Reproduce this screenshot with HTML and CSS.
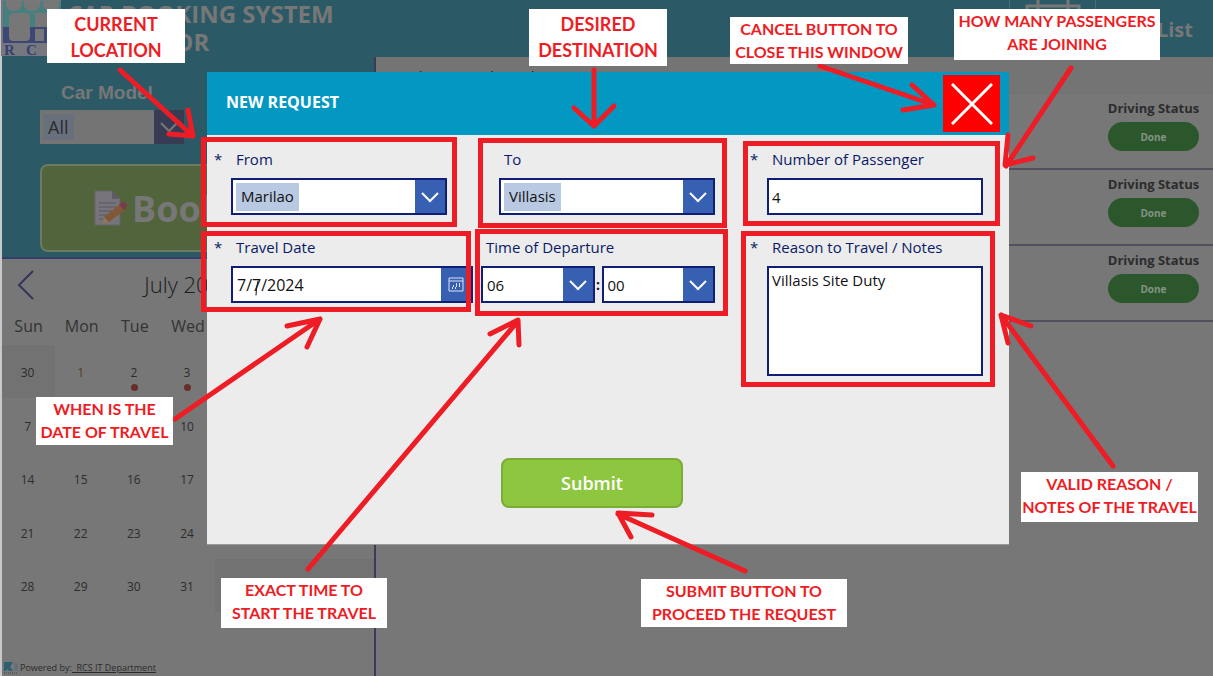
FILE: index.html
```html
<!DOCTYPE html>
<html lang="en">
<head>
<meta charset="utf-8">
<title>Car Booking System &amp; Monitor</title>
<link rel="stylesheet" href="styles.css">
</head>
<body>
<div class="stage">
  <div class="app">
    <header class="topbar">
      <svg class="logo" viewBox="0 0 60 56" role="img" aria-label="RCS logo">
        <rect width="60" height="56" fill="#777780"/>
        <rect x="2" y="1" width="58" height="26" fill="#467f80"/>
        <path d="M5 1h16v4a8 6 0 0 1-16 0zM23 1h16v4a8 6 0 0 1-16 0zM42 1h16v4a8 6 0 0 1-16 0z" fill="#777"/>
        <path d="M2 27h58v16H2z" fill="#3d4775"/>
        <path d="M8 37V18q0-5 5-5h13q3 0 3 4v20q0 4-4 4H12q-4 0-4-4z" fill="#777"/>
        <path d="M34 27V13h12q9 0 9 7t-7 7z" fill="#777"/>
        <path d="M34 29h9v12h-9z" fill="#777"/>
        <path d="M2 44h58v12H2z" fill="#777780"/>
        <g class="logo-text"><text x="3" y="55">R</text><text x="25" y="55">C</text><text x="47" y="55">S</text></g>
      </svg>
      <h1 class="title">CAR BOOKING SYSTEM<br>&amp; MONITOR</h1>
      <div class="cal-box">
        <svg viewBox="0 0 56 56" width="56" height="56" fill="none" stroke="#777" stroke-width="3"><path d="M2 56V6h52v50M13 0v14M43 0v14M2 14h52"/></svg>
      </div>
      <span class="list-title">Trip List</span>
    </header>
    <main class="columns">
      <section class="side">
        <div class="filters">
          <div class="model">
            <label class="model-label" for="model">Car Model</label>
            <div class="combo dim">
              <select id="model" class="chip"><option>All</option></select>
              <span class="arrow"><svg viewBox="0 0 20 12" width="20" height="12"><path d="M2 2l8 8 8-8"/></svg></span>
            </div>
          </div>
          <button class="book" type="button">
            <svg viewBox="0 0 34 36" width="34" height="36"><path d="M1 1h17l8 8v26H1z" fill="#77757b" stroke="#66646c"/><path d="M18 1v8h8z" fill="#5d5b66"/><path d="M5 13h17M5 17h17M5 21h13M5 25h10M5 29h6" stroke="#595866" stroke-width="1"/><path d="M8 34l2-7L26 14l5 6-16 12z" fill="#805838"/><path d="M25 15l3-3q3-1 5 4l-3 4z" fill="#7d3a4c"/><path d="M8 34l2-7 5 5z" fill="#8a7a60"/></svg>
            <span>Book Now</span>
          </button>
        </div>
        <div class="month">
          <button class="prev" type="button" aria-label="Previous month"><svg viewBox="0 0 20 32" width="20" height="32"><path d="M17 2L3 16l14 14" fill="none" stroke="#34355a" stroke-width="2"/></svg></button>
          <span class="month-name">July 2024</span>
        </div>
        <table class="calendar">
          <thead><tr><th>Sun</th><th>Mon</th><th>Tue</th><th>Wed</th><th>Thu</th><th>Fri</th><th>Sat</th></tr></thead>
          <tbody>
            <tr><td class="off">30</td><td class="today">1</td><td class="busy">2</td><td class="busy">3</td><td>4</td><td>5</td><td>6</td></tr>
            <tr><td>7</td><td>8</td><td>9</td><td>10</td><td>11</td><td>12</td><td>13</td></tr>
            <tr><td>14</td><td>15</td><td>16</td><td>17</td><td>18</td><td>19</td><td>20</td></tr>
            <tr><td>21</td><td>22</td><td>23</td><td>24</td><td>25</td><td>26</td><td>27</td></tr>
            <tr><td>28</td><td>29</td><td>30</td><td>31</td><td class="off"></td><td class="off"></td><td class="off"></td></tr>
          </tbody>
        </table>
        <footer class="credit">
          <svg viewBox="0 0 14 12" width="14" height="12"><path d="M0 0h9L6 5l3 4H5L3 7 2 9H0z" fill="#2b5f72"/><path d="M10 1h4v8h-4z" fill="#66707a"/><path d="M0 11h14" stroke="#444" stroke-dasharray="1 1"/></svg>
          <span>Powered by:<a href="#rcs">&nbsp; RCS IT Department</a></span>
        </footer>
      </section>
      <section class="trips">
        <div class="day">Travel Date: Friday, July 5, 2024</div>
        <div class="trip"><div class="status"><b>Driving Status</b><button type="button" class="pill">Done</button></div></div>
        <div class="trip"><div class="status"><b>Driving Status</b><button type="button" class="pill">Done</button></div></div>
        <div class="trip"><div class="status"><b>Driving Status</b><button type="button" class="pill">Done</button></div></div>
      </section>
    </main>
  </div>

  <form class="modal" role="dialog" aria-labelledby="dlg">
    <div class="modal-head">
      <h2 id="dlg">NEW REQUEST</h2>
      <button class="close" type="button" aria-label="Cancel"><svg viewBox="0 0 42 42" width="42" height="42"><path d="M1 1l40 40M41 1L1 41" stroke="#fff" stroke-width="3"/></svg></button>
    </div>
    <div class="row">
      <div class="field">
        <label for="from"><span class="req">*</span>From</label>
        <div class="combo"><select id="from" class="chip"><option>Marilao</option></select><span class="arrow"><svg viewBox="0 0 20 12" width="20" height="12"><path d="M2 2l8 8 8-8"/></svg></span></div>
      </div>
      <div class="field">
        <label for="to"><span class="req"></span>To</label>
        <div class="combo"><select id="to" class="chip"><option>Villasis</option></select><span class="arrow"><svg viewBox="0 0 20 12" width="20" height="12"><path d="M2 2l8 8 8-8"/></svg></span></div>
      </div>
      <div class="field">
        <label for="pax"><span class="req">*</span>Number of Passenger</label>
        <input id="pax" class="box" type="text" value="4">
      </div>
    </div>
    <div class="row row-date">
      <div class="field">
        <label for="date"><span class="req">*</span>Travel Date</label>
        <div class="combo"><input id="date" class="plain date" type="text" value="7/7/2024"><span class="arrow"><svg class="cal-icon" viewBox="0 0 16 15" width="16" height="15"><path d="M1 1h14v13H1zM1 4h14"/><path d="M8 7h1M11 7h1M5 9h1M8 9h1M11 9h1M4 11h1M7 11h1" stroke-width="2"/></svg></span></div>
      </div>
      <div class="field">
        <label for="hour"><span class="req"></span>Time of Departure</label>
        <div class="time">
          <div class="combo"><select id="hour" class="plain"><option>06</option></select><span class="arrow"><svg viewBox="0 0 20 12" width="20" height="12"><path d="M2 2l8 8 8-8"/></svg></span></div>
          <b class="colon">:</b>
          <div class="combo"><select class="plain" aria-label="Minutes"><option>00</option></select><span class="arrow"><svg viewBox="0 0 20 12" width="20" height="12"><path d="M2 2l8 8 8-8"/></svg></span></div>
        </div>
      </div>
      <div class="field notes">
        <label for="notes"><span class="req">*</span>Reason to Travel / Notes</label>
        <textarea id="notes" class="box">Villasis Site Duty</textarea>
      </div>
    </div>
    <button class="submit" type="button">Submit</button>
  </form>

  <div class="frame f-from"></div>
  <div class="frame f-to"></div>
  <div class="frame f-pax"></div>
  <div class="frame f-date"></div>
  <div class="frame f-time"></div>
  <div class="frame f-notes"></div>
  <svg class="arrows" viewBox="0 0 1213 676" width="1213" height="676" aria-hidden="true">
    <path d="M120 70L193 136M188 110L193 136L169 134"/>
    <path d="M594 70V126M574 108L594 126L614 106"/>
    <path d="M820 66L934 105M912 85L934 105L903 110"/>
    <path d="M1071 68L1006 166M1008 135L1005 165L1033 158"/>
    <path d="M175 419L320 319M287 326L320 319L307 347"/>
    <path d="M308 569L518 321M490 334L518 320L519 345"/>
    <path d="M745 571L618 514M652 515L618 513L631 537"/>
    <path d="M1113 466L1001 315M1031 326L1001 315L1008 343"/>
    <path class="caret" d="M258 281Q256 288 256 295"/>
  </svg>
  <div class="note big n-from">CURRENT<br>LOCATION</div>
  <div class="note big n-to">DESIRED<br>DESTINATION</div>
  <div class="note n-cancel">CANCEL BUTTON TO<br>CLOSE THIS WINDOW</div>
  <div class="note n-pax">HOW MANY PASSENGERS<br>ARE JOINING</div>
  <div class="note n-date">WHEN IS THE<br>DATE OF TRAVEL</div>
  <div class="note n-time">EXACT TIME TO<br>START THE TRAVEL</div>
  <div class="note n-submit">SUBMIT BUTTON TO<br>PROCEED THE REQUEST</div>
  <div class="note n-notes">VALID REASON /<br>NOTES OF THE TRAVEL</div>
</div>
</body>
</html>
```

FILE: styles.css
```css
* { box-sizing: border-box; }
body { margin: 0; background: #777; font-family: "Open Sans", "Noto Sans", sans-serif; color: #2b2b2b; }
button, input, select, textarea { font: inherit; color: inherit; border: 0; padding: 0; margin: 0; background: none; border-radius: 0; }
select { appearance: none; }
h1, h2 { margin: 0; }

.stage { position: relative; min-height: 100vh; overflow: hidden; }
.app { display: flex; flex-direction: column; min-height: 100vh; border-left: 2px solid #c8c8cc; }

.topbar { display: flex; height: 57px; background: #2b5a66; color: #777; }
.logo { width: 60px; height: 56px; flex: none; margin-left: -1px; }
.logo-text { font: bold 15px "Liberation Serif", serif; fill: #34406f; }
.title { flex: 1; margin-left: 6px; font-size: 24px; line-height: 28px; font-weight: 700; }
.cal-box { width: 87px; height: 57px; overflow: hidden; border: 1px solid #4c6c76; border-width: 0 1px; padding-left: 15px; }
.list-title { width: 117px; padding-right: 20px; text-align: right; font-size: 20px; line-height: 60px; font-weight: 700; white-space: nowrap; }

.columns { flex: 1; display: flex; }
.side { width: 374px; border-right: 2px solid #3a3a5a; display: flex; flex-direction: column; }
.filters { height: 202px; background: #2b5a66; border-bottom: 2px solid #34406a; padding: 24px 38px 0; display: flex; flex-direction: column; gap: 20px; }
.model { width: 144px; }
.model-label { display: block; padding-left: 21px; font: bold 19px/24px "Liberation Sans", sans-serif; color: #777; margin-bottom: 5px; }
.book { height: 88px; border: 2px solid #6b7a62; border-radius: 8px; background: #52643b; color: #777; font-size: 36px; font-weight: 700; display: flex; align-items: center; gap: 4px; padding-left: 52px; white-space: nowrap; }

.month { display: flex; height: 52px; align-items: center; }
.prev { width: 48px; height: 32px; }
.month-name { flex: 1; padding: 0 46px 3px 0; text-align: center; font-size: 22px; font-weight: 300; color: #1c1c1c; }
.calendar { width: 100%; table-layout: fixed; border-collapse: collapse; text-align: center; font-size: 12px; }
.calendar th { height: 34px; padding: 0 0 4px; font-size: 16px; font-weight: 400; color: #333; }
.calendar td { height: 53px; padding: 2px 2px 0 0; color: #2c2c2c; position: relative; }
.calendar tr:nth-child(even) td { height: 54px; }
.calendar .off { background: #727272; }
.calendar .today { color: #4f4022; }
.busy::after { content: ""; position: absolute; left: 50%; bottom: 7px; width: 7px; height: 7px; margin-left: -4px; border-radius: 50%; background: #6a2d2d; }
.credit { margin-top: auto; padding: 0 2px 1px; display: flex; align-items: center; gap: 2px; font-size: 9px; line-height: 14px; }
.credit a { color: inherit; }

.trips { flex: 1; }
.day { height: 37px; padding: 9px 4px 0; background: #747474; font-size: 15px; line-height: 20px; border-bottom: 1px solid #707070; color: #222; }
.trip { height: 76px; border-bottom: 2px solid #50505f; padding: 5px 14px 0 0; display: flex; justify-content: flex-end; }
.status { width: 91px; display: flex; flex-direction: column; align-items: center; gap: 4px; font-size: 13px; line-height: 19px; color: #2c2c2e; white-space: nowrap; }
.pill { width: 91px; height: 29px; border-radius: 15px; background: #2c572d; color: #849284; font-size: 10px; font-weight: 700; padding-top: 2px; }

.modal { position: absolute; left: 207px; top: 72px; width: 802px; height: 473px; background: #ececec; border-bottom: 1px solid #999; color: #0a1a66; }
.modal-head { height: 63px; background: #0398c1; display: flex; align-items: center; justify-content: space-between; padding: 0 9px 0 19px; color: #fff; }
.modal-head h2 { font-size: 16px; line-height: 20px; font-weight: 700; padding-bottom: 4px; }
.close { width: 57px; height: 57px; background: #f00; display: grid; place-items: center; }
.row { display: grid; grid-template-columns: 216px 216px 216px; gap: 52px; padding: 13px 0 0 24px; }
.row-date { grid-template-columns: 242px 234px 216px; column-gap: 0; padding-top: 21px; }
.row-date .field:nth-child(2) { margin-left: 8px; margin-right: -8px; }
.row-date .notes { margin-left: 60px; margin-right: -60px; }
.field label { display: flex; margin-left: -17px; height: 22px; line-height: 22px; font-size: 15px; margin-bottom: 8px; white-space: nowrap; }
.req { width: 22px; flex: none; }
.combo, .box { border: 2px solid #101f75; background: #fff; color: #111; font-size: 15px; }
.combo { height: 37px; display: flex; align-items: center; justify-content: space-between; }
.chip { height: 28px; margin-left: 3px; padding: 0 5px 2px; background: #b9c9e2; }
.plain { flex: 1; min-width: 0; height: 31px; padding-left: 4px; }
.date { font-size: 16px; }
.arrow { width: 30px; height: 33px; background: #3860b2; display: grid; place-items: center; flex: none; }
.arrow svg { fill: none; stroke: #fff; stroke-width: 2; }
.arrow .cal-icon { stroke: #dbe4f4; stroke-width: 1; }
.time { display: flex; align-items: center; }
.time .combo { flex: 1; min-width: 0; }
.colon { width: 7px; text-align: center; color: #111; font-size: 14px; }
.box { display: block; width: 100%; height: 37px; padding: 0 3px; }
textarea.box { height: 110px; padding: 3px; line-height: 19px; resize: none; }
.submit { display: block; width: 182px; height: 50px; margin: 82px 0 0 294px; border: 2px solid #7aac36; border-radius: 8px; background: #8dc73f; color: #fff; font-size: 18px; font-weight: 600; }

.dim { height: 34px; border: 0; background: #747474; color: #2b2b30; font-size: 18px; }
.dim .chip { background: #68707c; height: 26px; padding: 0 5px; }
.dim .arrow { height: 34px; background: #383b54; }
.dim .arrow svg { stroke: #777; }

.frame { position: absolute; border: 5px solid #ee1c24; }
.f-from { left: 201px; top: 137px; width: 256px; height: 90px; }
.f-to { left: 478px; top: 138px; width: 249px; height: 90px; }
.f-pax { left: 743px; top: 141px; width: 257px; height: 85px; }
.f-date { left: 201px; top: 231px; width: 270px; height: 81px; }
.f-time { left: 475px; top: 229px; width: 253px; height: 87px; }
.f-notes { left: 741px; top: 231px; width: 254px; height: 156px; }
.arrows { position: absolute; left: 0; top: 0; fill: none; stroke: #ee1c24; stroke-width: 5; stroke-linecap: round; stroke-linejoin: round; pointer-events: none; }
.arrows .caret { stroke: #111; stroke-width: 1; }
.note { position: absolute; background: #fff; color: #ee1c24; font: 700 16px/23px Lato, "Open Sans", sans-serif; text-align: center; white-space: nowrap; }
.note.big { font-size: 18px; line-height: 26px; padding-top: 2px; }
.n-from { left: 47px; top: 9px; width: 138px; height: 54px; }
.n-to { left: 529px; top: 9px; width: 138px; height: 57px; }
.n-cancel { left: 730px; top: 17px; width: 178px; height: 47px; }
.n-pax { left: 954px; top: 9px; width: 206px; height: 51px; }
.n-date { left: 36px; top: 397px; width: 137px; height: 48px; }
.n-time { left: 221px; top: 578px; width: 166px; height: 50px; }
.n-submit { left: 641px; top: 579px; width: 206px; height: 48px; }
.n-notes { left: 1021px; top: 472px; width: 177px; height: 50px; }
```
